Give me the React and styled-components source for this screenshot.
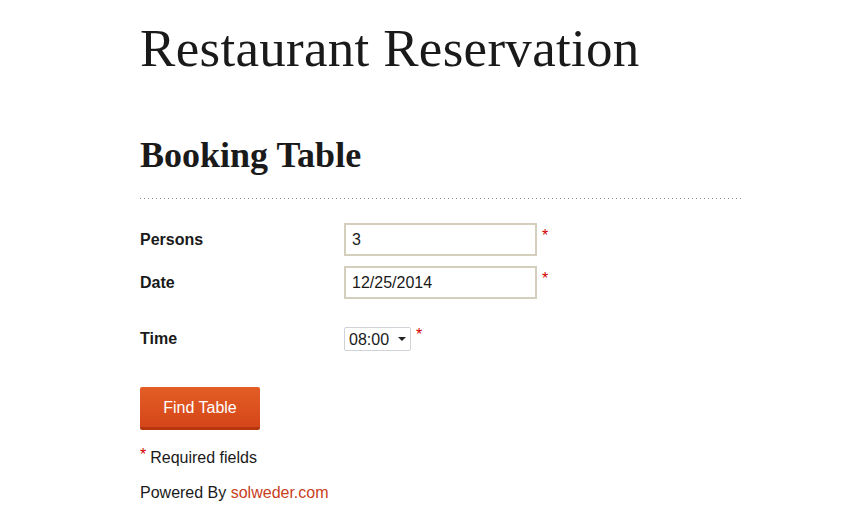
import React from "react";
import styled, { createGlobalStyle } from "styled-components";

const Global = createGlobalStyle`
  html, body { margin: 0; padding: 0; background: #fff; }
  body { font-family: "Liberation Sans", Arial, sans-serif; color: #1a1a1a; }
`;

const Page = styled.div`
  width: 601px;
  margin-left: 140px;
  padding-top: 18px;
`;

const Title = styled.h1`
  margin: 0;
  font-family: "Liberation Serif", "Times New Roman", serif;
  font-weight: normal;
  font-size: 53px;
  line-height: 60px;
  color: #1a1a1a;
  letter-spacing: 0.3px;
`;

const Subtitle = styled.h2`
  margin: 57px 0 0 0;
  font-family: "Liberation Serif", "Times New Roman", serif;
  font-weight: bold;
  font-size: 36px;
  line-height: 40px;
  color: #1a1a1a;
`;

const Divider = styled.div`
  margin-top: 23px;
  height: 1px;
  background-image: linear-gradient(to right, #8a8a8a 1px, transparent 1px);
  background-size: 4px 1px;
  background-repeat: repeat-x;
`;

const Form = styled.form`
  margin-top: 24px;
  display: flex;
  flex-direction: column;
`;

const Row = styled.div`
  display: flex;
  align-items: center;
  margin-top: ${(p) => p.$gap || 0}px;
`;

const Label = styled.label`
  width: 204px;
  flex-shrink: 0;
  font-weight: bold;
  font-size: 16px;
`;

const Field = styled.div`
  display: flex;
  align-items: flex-start;
`;

const TextInput = styled.input`
  box-sizing: border-box;
  width: 193px;
  height: 33px;
  border: 2px solid #d3cfbc;
  padding: 0 6px;
  font-family: "Liberation Sans", Arial, sans-serif;
  font-size: 16px;
  color: #1a1a1a;
  outline: none;
  background: #fff;
`;

const Star = styled.span`
  color: #d40000;
  font-size: 16px;
  line-height: 16px;
  margin-left: 5px;
  margin-top: ${(p) => (p.$top != null ? p.$top : 5)}px;
`;

const SelectWrap = styled.span`
  position: relative;
  display: inline-block;
`;

const Select = styled.select`
  appearance: none;
  -webkit-appearance: none;
  box-sizing: border-box;
  width: 67px;
  height: 24px;
  border: 1px solid #cfd3d8;
  border-radius: 2px;
  background: #fff;
  padding: 0 0 0 4px;
  font-family: "Liberation Sans", Arial, sans-serif;
  font-size: 16px;
  color: #1a1a1a;
  outline: none;
`;

const Arrow = styled.svg`
  position: absolute;
  right: 5px;
  top: 10px;
  pointer-events: none;
`;

const Button = styled.button`
  margin-top: 36px;
  align-self: flex-start;
  box-sizing: border-box;
  width: 120px;
  height: 43px;
  border: none;
  border-bottom: 3px solid #b8360e;
  border-radius: 2px;
  background: linear-gradient(to bottom, #e35e25, #d5461a);
  color: #fff;
  font-family: "Liberation Sans", Arial, sans-serif;
  font-size: 16px;
  padding: 2px 0 0 0;
  cursor: pointer;
`;

const Note = styled.p`
  margin: 18px 0 0 0;
  font-size: 16px;
  line-height: 20px;
`;

const NoteStar = styled.span`
  color: #d40000;
  position: relative;
  top: -3px;
  margin-right: 4px;
`;

const Footer = styled.p`
  margin: 15px 0 0 0;
  font-size: 16px;
  line-height: 20px;
`;

const Link = styled.a`
  color: #c8401c;
  text-decoration: none;
`;

export default function App() {
  return (
    <>
      <Global />
      <Page>
        <Title>Restaurant Reservation</Title>
        <Subtitle>Booking Table</Subtitle>
        <Divider />
        <Form onSubmit={(e) => e.preventDefault()}>
          <Row>
            <Label>Persons</Label>
            <Field>
              <TextInput defaultValue="3" />
              <Star>*</Star>
            </Field>
          </Row>
          <Row $gap={10}>
            <Label>Date</Label>
            <Field>
              <TextInput defaultValue="12/25/2014" />
              <Star>*</Star>
            </Field>
          </Row>
          <Row $gap={28}>
            <Label>Time</Label>
            <Field>
              <SelectWrap>
                <Select defaultValue="08:00">
                  <option>08:00</option>
                  <option>09:00</option>
                  <option>10:00</option>
                </Select>
                <Arrow width="8" height="4" viewBox="0 0 8 4">
                  <path d="M0 0 L8 0 L4 4 Z" fill="#222" />
                </Arrow>
              </SelectWrap>
              <Star $top={0}>*</Star>
            </Field>
          </Row>
          <Button type="submit">Find Table</Button>
        </Form>
        <Note>
          <NoteStar>*</NoteStar>Required fields
        </Note>
        <Footer>
          Powered By <Link href="#">solweder.com</Link>
        </Footer>
      </Page>
    </>
  );
}
